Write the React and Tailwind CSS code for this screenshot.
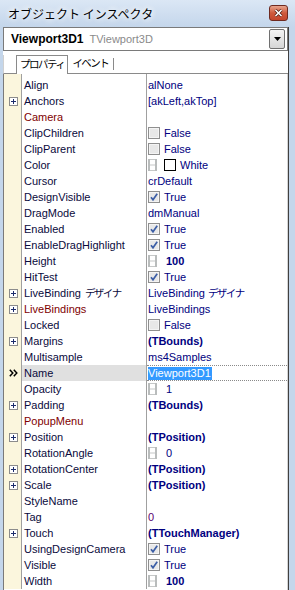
import React from 'react';

const rows = [
  { name: 'Align', text: 'alNone' },
  { name: 'Anchors', plus: true, text: '[akLeft,akTop]' },
  { name: 'Camera', red: true },
  { name: 'ClipChildren', check: false },
  { name: 'ClipParent', check: false },
  { name: 'Color', color: 'White' },
  { name: 'Cursor', text: 'crDefault' },
  { name: 'DesignVisible', check: true },
  { name: 'DragMode', text: 'dmManual' },
  { name: 'Enabled', check: true },
  { name: 'EnableDragHighlight', check: true },
  { name: 'Height', spin: '100', bold: true },
  { name: 'HitTest', check: true },
  { name: 'LiveBinding', jp: 'デザイナ', plus: true, text: 'LiveBinding', textJp: 'デザイナ' },
  { name: 'LiveBindings', plus: true, red: true, text: 'LiveBindings' },
  { name: 'Locked', check: false },
  { name: 'Margins', plus: true, text: '(TBounds)', bold: true },
  { name: 'Multisample', text: 'ms4Samples' },
  { name: 'Name', selected: true, text: 'Viewport3D1' },
  { name: 'Opacity', spin: '1' },
  { name: 'Padding', plus: true, text: '(TBounds)', bold: true },
  { name: 'PopupMenu', red: true },
  { name: 'Position', plus: true, text: '(TPosition)', bold: true },
  { name: 'RotationAngle', spin: '0' },
  { name: 'RotationCenter', plus: true, text: '(TPosition)', bold: true },
  { name: 'Scale', plus: true, text: '(TPosition)', bold: true },
  { name: 'StyleName' },
  { name: 'Tag', text: '0', purple: true },
  { name: 'Touch', plus: true, text: '(TTouchManager)', bold: true },
  { name: 'UsingDesignCamera', check: true },
  { name: 'Visible', check: true },
  { name: 'Width', spin: '100', bold: true },
];

const PlusBox = () => (
  <svg width="9" height="9" viewBox="0 0 9 9">
    <rect x="0.5" y="0.5" width="8" height="8" fill="#fff" stroke="#8c8c8c" />
    <path d="M2 4.5h5M4.5 2v5" stroke="#1c2c6c" strokeWidth="1" />
  </svg>
);

const CheckBox = ({ checked }) => (
  <svg width="12" height="12" viewBox="0 0 12 12" className="shrink-0">
    <rect x="0.5" y="0.5" width="11" height="11" fill="#dedede" stroke="#8f8f8f" />
    <rect x="1.5" y="1.5" width="9" height="9" fill="#e8e8e8" stroke="#f4f4f4" />
    {checked && <path d="M3 6.2l2 2.6 4.2-6" fill="none" stroke="#3c5ea6" strokeWidth="1.7" />}
  </svg>
);

const Spin = () => (
  <svg width="9" height="12" viewBox="0 0 9 12" className="shrink-0 block">
    <rect x="0" y="0" width="2" height="12" fill="#b9bcbc" />
    <rect x="7" y="0" width="2" height="12" fill="#b9bcbc" />
    <rect x="2" y="0" width="5" height="1" fill="#c6c8c8" />
    <rect x="2" y="5.5" width="5" height="1" fill="#c6c8c8" />
    <rect x="2" y="11" width="5" height="1" fill="#c6c8c8" />
  </svg>
);

const Value = ({ r }) => {
  const tone = r.purple ? 'text-[#5a0070]' : 'text-[#000080]';
  const weight = r.bold ? 'font-bold' : '';
  if (r.check !== undefined) {
    return (
      <div className="flex items-center gap-[4px]">
        <CheckBox checked={r.check} />
        <span className="text-[#000080]">{r.check ? 'True' : 'False'}</span>
      </div>
    );
  }
  if (r.color) {
    return (
      <div className="flex items-center">
        <Spin />
        <span className="ml-[7px] w-[12px] h-[12px] border border-black bg-white" />
        <span className="ml-[4px] text-[#000080]">{r.color}</span>
      </div>
    );
  }
  if (r.spin) {
    return (
      <div className="flex items-center">
        <Spin />
        <span className={`ml-[9px] ${tone} ${weight}`}>{r.spin}</span>
      </div>
    );
  }
  if (r.selected) {
    return <span className="bg-[#3399ff] text-white leading-[13px] pr-[1px]">{r.text}</span>;
  }
  if (!r.text) return null;
  return (
    <span className={`${tone} ${weight}`}>
      {r.text}
      {r.textJp && <span className="ml-[3px] tracking-[-1.5px] text-[10.5px]">{r.textJp}</span>}
    </span>
  );
};

const Row = ({ r }) => (
  <div className="flex h-[16px]">
    <div className="w-[18px] shrink-0 bg-[#fbf6dd] border-r border-[#a0a0a0] flex items-center justify-center pl-[2px]">
      {r.plus && <PlusBox />}
      {r.selected && (
        <svg width="9" height="8" viewBox="0 0 9 8">
          <path d="M0.8 0.8l3 3.2-3 3.2M4.8 0.8l3 3.2-3 3.2" fill="none" stroke="#000" strokeWidth="1.5" />
        </svg>
      )}
    </div>
    <div
      className={`w-[125px] shrink-0 border-r border-[#a0a0a0] pl-[2px] leading-[16px] whitespace-nowrap overflow-hidden ${
        r.selected ? 'bg-[#e0e0e0]' : ''
      } ${r.red ? 'text-[#800000]' : 'text-[#0a0a3c]'}`}
    >
      {r.name}
      {r.jp && <span className="ml-[4px] tracking-[-1.5px] text-[10.5px]">{r.jp}</span>}
    </div>
    <div
      className={`flex-1 min-w-0 flex items-center pl-[1px] whitespace-nowrap overflow-hidden ${
        r.selected ? 'border-y border-dotted border-[#8a8a8a]' : ''
      }`}
    >
      <Value r={r} />
    </div>
  </div>
);

export default function App() {
  return (
    <div className="w-[295px] h-[590px] overflow-hidden bg-[#c4d6eb] flex flex-col font-['Liberation_Sans','Noto_Sans_CJK_JP',sans-serif] text-[11px]">
      {/* title bar */}
      <div className="h-[27px] shrink-0 flex items-start justify-between pl-[8px] pr-[7px] bg-gradient-to-b from-[#dbe7f5] to-[#c4d6eb]">
        <span className="mt-[5px] leading-[17px] text-[12px] text-black font-['Noto_Sans_CJK_JP',sans-serif] [text-shadow:0_0_6px_#fff,0_0_6px_#fff]">
          オブジェクト インスペクタ
        </span>
        <div className="mt-[5px] w-[19px] h-[16px] rounded-[3px] border border-[#6e2a20] bg-gradient-to-b from-[#e6a48e] via-[#cf5a3c] to-[#c3452c] flex items-center justify-center">
          <svg width="9" height="8" viewBox="0 0 9 8">
            <path d="M1.5 1l6 6M7.5 1l-6 6" stroke="#4a1a12" strokeWidth="3" />
            <path d="M1.5 1l6 6M7.5 1l-6 6" stroke="#fff" strokeWidth="1.6" />
          </svg>
        </div>
      </div>

      {/* client */}
      <div className="flex-1 min-h-0 flex flex-col ml-[3px] w-[286px] bg-white border-r border-[#404040]">
        {/* combo */}
        <div className="h-[24px] shrink-0 flex items-center border border-[#7a7a7a] pl-[7px] pr-[2px]">
          <span className="font-bold text-[12px] text-black">Viewport3D1</span>
          <span className="ml-[6px] text-[#8a8a8a]">TViewport3D</span>
          <div className="ml-auto w-[16px] h-[20px] rounded-[2px] border border-[#707070] bg-gradient-to-b from-[#f4f4f4] to-[#d6d6d6] flex items-center justify-center">
            <svg width="7" height="4" viewBox="0 0 7 4">
              <path d="M0 0h7L3.5 4z" fill="#000" />
            </svg>
          </div>
        </div>

        {/* tabs */}
        <div className="mt-[4px] h-[19px] shrink-0 flex items-end pl-[12px] border-b border-[#8a8a8a] border-l border-l-[#d0d0d0]">
          <div className="h-[19px] -mb-px border-l border-t border-r border-[#8a8a8a] bg-white px-[3px] flex items-center text-[10.5px] tracking-[-1.5px] text-black">
            プロパティ
          </div>
          <div className="h-[19px] pl-[4px] flex items-center text-[10.5px] tracking-[-1.5px] text-black">
            イベント
            <span className="ml-[5px] w-px h-[12px] bg-[#8a8a8a]" />
          </div>
        </div>

        {/* grid */}
        <div className="flex-1 min-h-0 flex flex-col border-r border-[#d4d4d4] border-l border-l-[#7a7a7a]">
          <div className="flex h-[3px] shrink-0">
            <div className="w-[18px] bg-[#fbf6dd] border-r border-[#a0a0a0]" />
            <div className="w-[125px] border-r border-[#a0a0a0]" />
          </div>
          {rows.map((r) => (
            <Row key={r.name} r={r} />
          ))}
        </div>
      </div>
    </div>
  );
}
